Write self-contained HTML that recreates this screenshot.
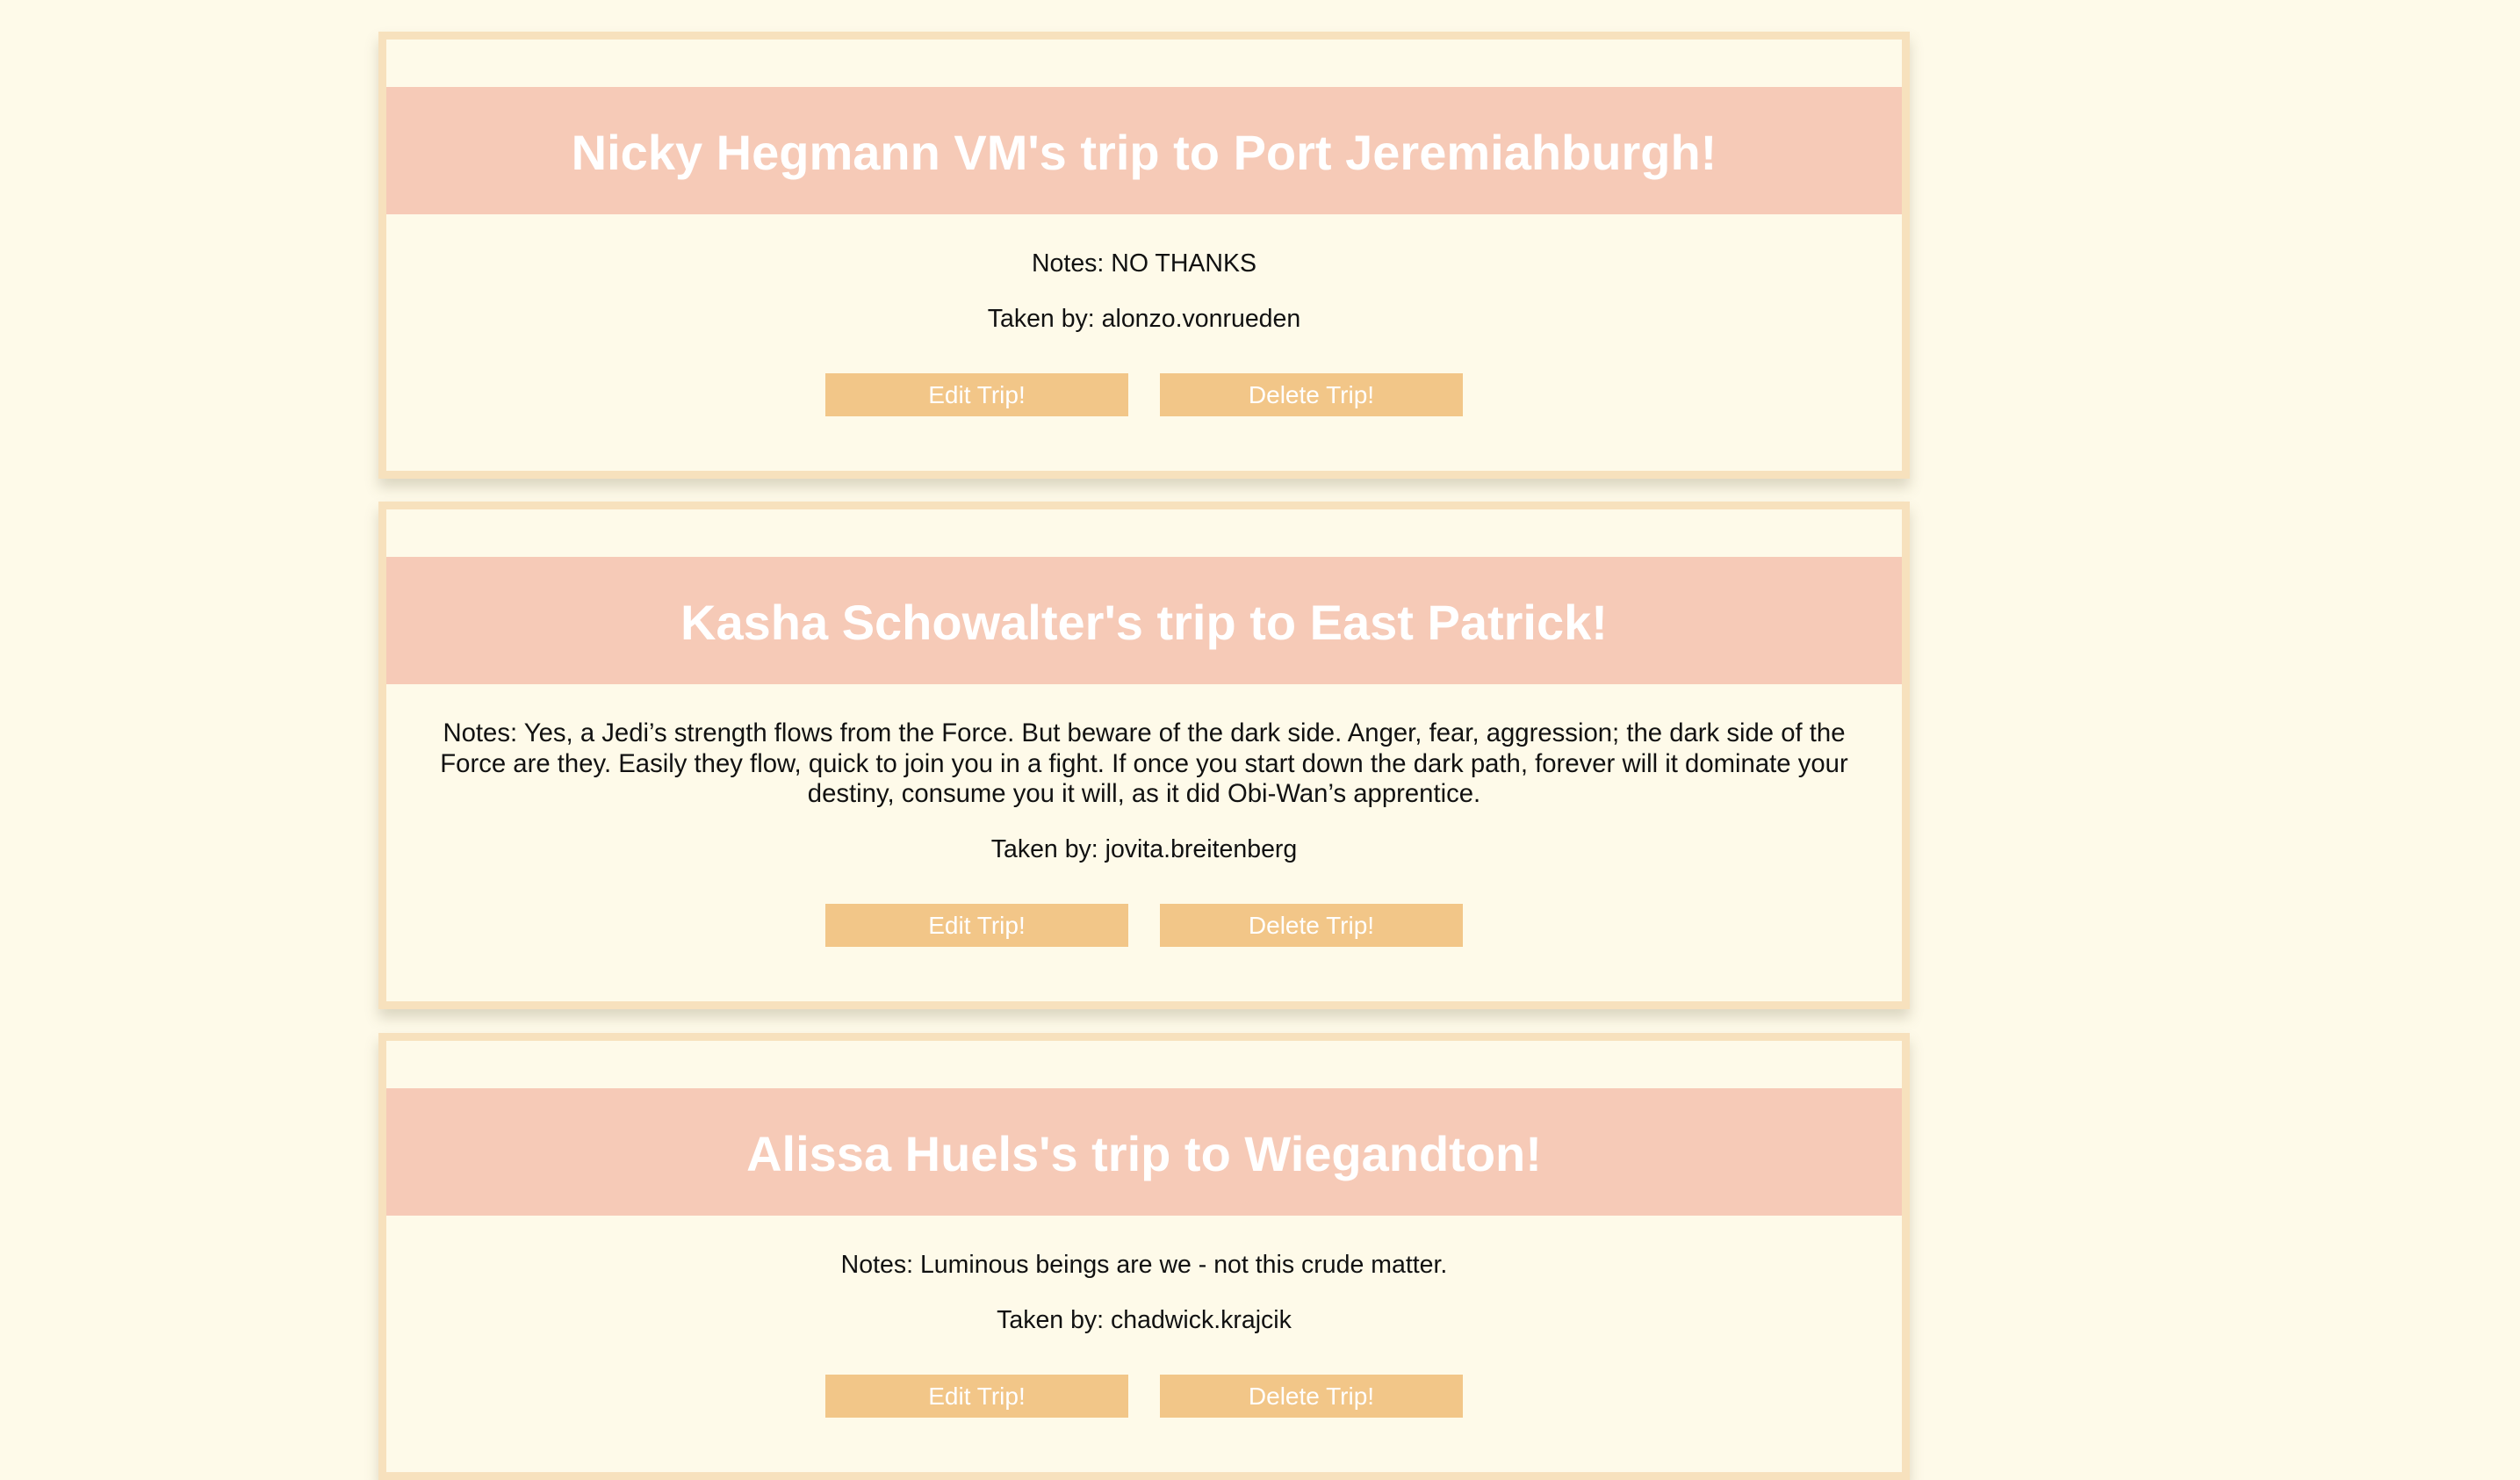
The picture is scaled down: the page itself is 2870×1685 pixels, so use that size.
<!DOCTYPE html>
<html><head><meta charset="utf-8"><style>
html,body{margin:0;padding:0;background:#fefae9;width:2870px;height:1636px;overflow:hidden;font-family:"Liberation Sans",sans-serif;}
.card{position:absolute;left:431px;width:1726px;border:9px solid #f7e1bd;background:#fefae9;box-shadow:0 10px 14px rgba(120,110,80,0.25);}
.top{height:54px}
.hdr{height:145px;background:#f6cab7;color:#fff;font-weight:bold;font-size:56px;letter-spacing:0;text-align:center;line-height:150px;white-space:nowrap}
p{margin:0;text-align:center;font-size:28.5px;line-height:34.5px;color:#111;white-space:nowrap}
.long{font-size:29.3px}
.notes{margin-top:39px}
.taken{margin-top:28px}
.btns{margin-top:45px;height:49px;text-align:center;font-size:0}
.b{display:inline-block;width:345px;height:49px;background:#f2c688;color:#fff;font-size:28px;line-height:49px;text-align:center;margin:0 18px}
</style></head><body>
<div class="card" style="top:36px;height:491px">
<div class="top"></div>
<div class="hdr">Nicky Hegmann VM's trip to Port Jeremiahburgh!</div>
<p class="notes">Notes: NO THANKS</p>
<p class="taken">Taken by: alonzo.vonrueden</p>
<div class="btns"><span class="b">Edit Trip!</span><span class="b">Delete Trip!</span></div>
</div>
<div class="card" style="top:571px;height:560px">
<div class="top"></div>
<div class="hdr">Kasha Schowalter's trip to East Patrick!</div>
<p class="notes long">Notes: Yes, a Jedi’s strength flows from the Force. But beware of the dark side. Anger, fear, aggression; the dark side of the<br>Force are they. Easily they flow, quick to join you in a fight. If once you start down the dark path, forever will it dominate your<br>destiny, consume you it will, as it did Obi-Wan’s apprentice.</p>
<p class="taken">Taken by: jovita.breitenberg</p>
<div class="btns"><span class="b">Edit Trip!</span><span class="b">Delete Trip!</span></div>
</div>
<div class="card" style="top:1176px;height:491px">
<div class="top"></div>
<div class="hdr">Alissa Huels's trip to Wiegandton!</div>
<p class="notes">Notes: Luminous beings are we - not this crude matter.</p>
<p class="taken">Taken by: chadwick.krajcik</p>
<div class="btns"><span class="b">Edit Trip!</span><span class="b">Delete Trip!</span></div>
</div>
</body></html>
